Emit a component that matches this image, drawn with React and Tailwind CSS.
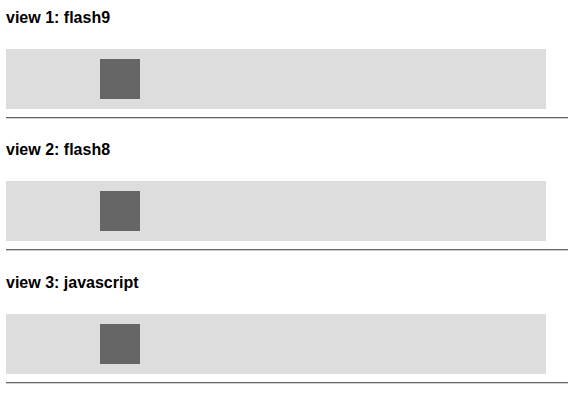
import React from 'react'

const views = [
  { title: 'view 1: flash9', gap: '' },
  { title: 'view 2: flash8', gap: 'mt-[22px]' },
  { title: 'view 3: javascript', gap: 'mt-[23px]' },
]

const App = () => {
  return (
    <div className="pl-[6px] pt-[9px] bg-white min-h-screen" style={{ fontFamily: '"Liberation Sans", Arial, sans-serif' }}>
      {views.map((view) => (
        <div key={view.title} className={view.gap}>
          <h3 className="text-[16px] leading-[18px] font-bold text-black">{view.title}</h3>
          <div className="mt-[22px] w-[540px] h-[60px] bg-[#dddddd] pt-[10px]">
            <div className="ml-[94px] w-[40px] h-[40px] bg-[#666666]" />
          </div>
          <div className="mt-[8px] w-[562px] border-t border-t-[#666666] border-b border-b-[#d0d0d0]" />
        </div>
      ))}
    </div>
  )
}

export default App
